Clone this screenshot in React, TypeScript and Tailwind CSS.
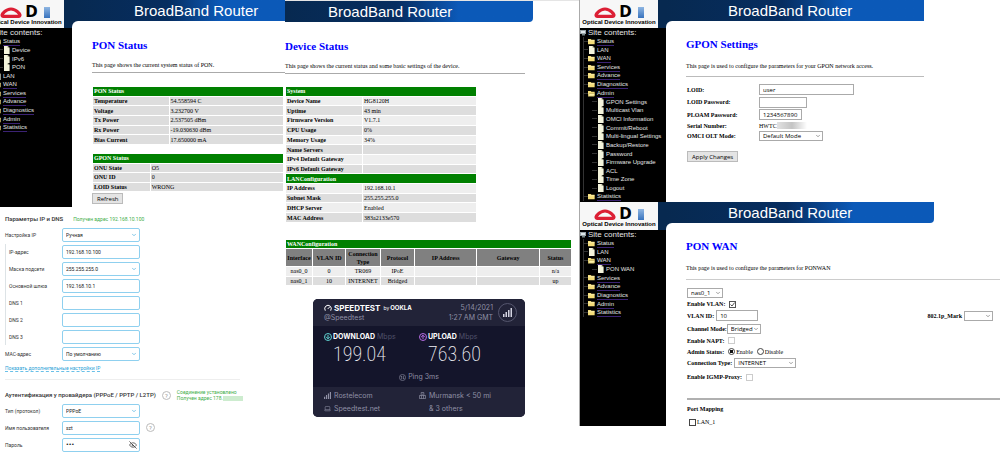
import clsx from "clsx";
import type { ReactNode } from "react";
import {
  ArrowDown,
  ArrowUp,
  ChevronDown,
  EyeOff,
  Gauge,
  Laptop,
} from "lucide-react";

type TreeItem = {
  label: string;
  icon: "folder" | "open" | "page";
  nested?: boolean;
};

type Row = [string, string];

const statusTree: TreeItem[] = [
  { label: "Status", icon: "open" },
  { label: "Device", icon: "page", nested: true },
  { label: "IPv6", icon: "page", nested: true },
  { label: "PON", icon: "page", nested: true },
  { label: "LAN", icon: "page" },
  { label: "WAN", icon: "folder" },
  { label: "Services", icon: "folder" },
  { label: "Advance", icon: "folder" },
  { label: "Diagnostics", icon: "folder" },
  { label: "Admin", icon: "folder" },
  { label: "Statistics", icon: "folder" },
];

const adminTree: TreeItem[] = [
  { label: "Status", icon: "folder" },
  { label: "LAN", icon: "page" },
  { label: "WAN", icon: "folder" },
  { label: "Services", icon: "folder" },
  { label: "Advance", icon: "folder" },
  { label: "Diagnostics", icon: "folder" },
  { label: "Admin", icon: "open" },
  { label: "GPON Settings", icon: "page", nested: true },
  { label: "Multicast Vlan", icon: "page", nested: true },
  { label: "OMCI Information", icon: "page", nested: true },
  { label: "Commit/Reboot", icon: "page", nested: true },
  { label: "Multi-lingual Settings", icon: "page", nested: true },
  { label: "Backup/Restore", icon: "page", nested: true },
  { label: "Password", icon: "page", nested: true },
  { label: "Firmware Upgrade", icon: "page", nested: true },
  { label: "ACL", icon: "page", nested: true },
  { label: "Time Zone", icon: "page", nested: true },
  { label: "Logout", icon: "page", nested: true },
  { label: "Statistics", icon: "folder" },
];

const wanTree: TreeItem[] = [
  { label: "Status", icon: "folder" },
  { label: "LAN", icon: "page" },
  { label: "WAN", icon: "open" },
  { label: "PON WAN", icon: "page", nested: true },
  { label: "Services", icon: "folder" },
  { label: "Advance", icon: "folder" },
  { label: "Diagnostics", icon: "folder" },
  { label: "Admin", icon: "folder" },
  { label: "Statistics", icon: "folder" },
];

const ponRows: Row[] = [
  ["Temperature", "54.558594 C"],
  ["Voltage", "3.232700 V"],
  ["Tx Power", "2.537505 dBm"],
  ["Rx Power", "-19.030630 dBm"],
  ["Bias Current", "17.650000 mA"],
];

const gponRows: Row[] = [
  ["ONU State", "O5"],
  ["ONU ID", "0"],
  ["LOID Status", "WRONG"],
];

const systemRows: Row[] = [
  ["Device Name", "HG8120H"],
  ["Uptime", "43 min"],
  ["Firmware Version", "V1.7.1"],
  ["CPU Usage", "0%"],
  ["Memory Usage", "34%"],
  ["Name Servers", ""],
  ["IPv4 Default Gateway", ""],
  ["IPv6 Default Gateway", ""],
];

const lanRows: Row[] = [
  ["IP Address", "192.168.10.1"],
  ["Subnet Mask", "255.255.255.0"],
  ["DHCP Server", "Enabled"],
  ["MAC Address", "383a2133e570"],
];

function TreeIcon({ icon }: { icon: TreeItem["icon"] }) {
  if (icon === "page") {
    return (
      <svg viewBox="0 0 7 8" className="h-2 w-[7px] shrink-0">
        <path d="M1 0h3.6L6.6 2v6H1z" fill="#f4f4dc" />
        <path d="M4.6 0v2h2z" fill="#a9a98c" />
      </svg>
    );
  }
  return (
    <svg viewBox="0 0 8 7" className="h-[7px] w-[7px] shrink-0">
      <path d="M0 .6h3l1 1h3.600v5H0z" fill="#f3dc78" />
      {icon === "open" ? (
        <path d="M0 6.6 1.5 3.4H8L6.8 6.6z" fill="#fff3a8" stroke="#7c6a20" strokeWidth=".4" />
      ) : (
        <path d="M0 2.6h7.4" stroke="#fff6c4" strokeWidth=".7" />
      )}
    </svg>
  );
}

function OdiLogo() {
  return (
    <div className="flex h-7 w-[78px] shrink-0 flex-col items-center overflow-hidden bg-[#f7f7f7]">
      <div className="mt-1.5 flex h-3 items-center gap-[3px]">
        <svg viewBox="0 0 22 11" className="h-[11px] w-[22px]">
          <path
            d="M3.500 9.300C1 9.300 2 7 4 5.200 6.300 3 8.500 2 11 2s4.700 1 7 3.200c2 1.800 3 4.100.5 4.100z"
            fill="none"
            stroke="#dc1f35"
            strokeWidth="3.200"
          />
        </svg>
        <span className="font-['DejaVu_Sans'] text-[15px] leading-3 font-bold text-black">D</span>
        <span className="ml-[3px] h-[11px] w-1.5 bg-linear-to-b from-[#8fb6e2] to-[#3873bd]" />
      </div>
      <span className="mt-px font-['Liberation_Sans'] text-[6px] leading-[6px] font-bold whitespace-nowrap text-black">
        Optical Device Innovation
      </span>
    </div>
  );
}

function SiteTree({ items, className }: { items: TreeItem[]; className: string }) {
  return (
    <nav className="w-[86px] font-['Liberation_Sans'] text-[#e4e4e4]">
      <p className="flex h-[9px] items-center gap-px text-[8px] leading-[9px] whitespace-nowrap">
        <svg viewBox="0 0 7 7" className="h-[7px] w-[7px] shrink-0">
          <path d="M0 1h6v4H0z" fill="#9aa4a8" />
          <path d="M1 2h4v2H1z" fill="#dfe8ea" />
          <path d="M2 5h3v1.500H2z" fill="#788" />
        </svg>
        Site contents:
      </p>
      <ul className={clsx("ml-[3px] grid auto-rows-fr border-l border-[#333]", className)}>
        {items.map((item) => (
          <li key={item.label} className="flex min-h-0 items-center">
            <span className={clsx("h-px shrink-0 bg-[#333]", item.nested ? "ml-2 w-[5px]" : "w-1")} />
            <TreeIcon icon={item.icon} />
            <a
              href="#"
              className={clsx(
                "ml-[2px] text-[6px] leading-[8px] whitespace-nowrap",
                item.icon !== "page" && "border-b border-[#3b2273] leading-[7px]",
              )}
            >
              {item.label}
            </a>
          </li>
        ))}
      </ul>
    </nav>
  );
}

function Title({ children }: { children: ReactNode }) {
  return <h1 className="text-[11px] leading-[14px] font-bold text-[#0000ff]">{children}</h1>;
}

function BrandBar({ className }: { className: string }) {
  return (
    <div
      className={clsx(
        "flex items-center bg-linear-to-r from-[#072950] via-[#062d60] via-45% to-[#0b59b8] to-70% font-['Liberation_Sans'] text-[15px] leading-[20px] whitespace-nowrap text-white",
        className,
      )}
    >
      BroadBand Router
    </div>
  );
}

type RouterPanelProps = {
  tree: TreeItem[];
  treeClass: string;
  sideClass: string;
  barClass: string;
  className: string;
  children: ReactNode;
};

function RouterPanel({ tree, treeClass, sideClass, barClass, className, children }: RouterPanelProps) {
  return (
    <section className={clsx("flex", className)}>
      <div className={clsx("flex shrink-0 flex-col overflow-hidden bg-black", sideClass)}>
        <div className="flex w-[86px] bg-[#072950]">
          <OdiLogo />
        </div>
        <SiteTree items={tree} className={treeClass} />
      </div>
      <div className="flex min-w-0 flex-1 flex-col">
        <BrandBar className={clsx("shrink-0 pl-[62px]", barClass)} />
        <div className="flex-1 bg-[#072950]">
          <div className="h-full rounded-tl-[6px] bg-white">{children}</div>
        </div>
      </div>
    </section>
  );
}

function GreenHead({ children, span = 2 }: { children: ReactNode; span?: number }) {
  return (
    <tr className="bg-[#008000] text-left text-white">
      <th colSpan={span} className="px-px py-0">
        {children}
      </th>
    </tr>
  );
}

function InfoRows({ rows, labelClass, striped }: { rows: Row[]; labelClass: string; striped?: boolean }) {
  return rows.map(([label, value], i) => (
    <tr key={label} className={striped && i % 2 === 0 ? "bg-[#eeeeee]" : "bg-[#dddddd]"}>
      <th className={clsx("px-px py-0 text-left", labelClass)}>{label}</th>
      <td className="px-px py-0">{value}</td>
    </tr>
  ));
}

const tableClass = "border-separate border-spacing-px text-[6px] leading-[8px]";

function PonStatus() {
  return (
    <RouterPanel
      tree={statusTree}
      treeClass="h-[95px]"
      sideClass="w-[72px] items-end"
      barClass="h-[21px]"
      className="h-[207px]"
    >
      <div className="pt-[17px] pl-5">
        <Title>PON Status</Title>
        <p className="mt-[9px] text-[6px] leading-[8px]">This page shows the current system status of PON.</p>
        <hr className="mt-[3px] border-t border-[#aaa]" />
        <div className="pr-px">
          <table className={clsx(tableClass, "mt-[13px] h-[59px] w-full")}>
            <tbody>
              <GreenHead>PON Status</GreenHead>
              <InfoRows rows={ponRows} labelClass="w-[40%]" />
            </tbody>
          </table>
          <table className={clsx(tableClass, "mt-2 h-[39px] w-full")}>
            <tbody>
              <GreenHead>GPON Status</GreenHead>
              <InfoRows rows={gponRows} labelClass="w-[30%]" />
            </tbody>
          </table>
        </div>
        <button className="mt-px block h-[11px] border border-[#bbb] bg-[#e4e4e4] px-1 font-['Open_Sans'] text-[6px] leading-[8px]">
          Refresh
        </button>
      </div>
    </RouterPanel>
  );
}

function DeviceStatus() {
  return (
    <section className="border-t border-[#e5e5e5]">
      <BrandBar className="mr-[46px] h-[21px] rounded-br-[4px] pl-[43px]" />
      <div className="pt-[17px]">
        <Title>Device Status</Title>
        <p className="mt-[9px] text-[6px] leading-[8px]">
          This page shows the current status and some basic settings of the device.
        </p>
        <hr className="mt-[3px] mr-[54px] border-t border-[#aaa]" />
        <table className={clsx(tableClass, "mt-[12px] h-[137px] w-[192px]")}>
          <tbody>
            <GreenHead>System</GreenHead>
            <InfoRows rows={systemRows} labelClass="w-[76px]" striped />
            <GreenHead>LANConfiguration</GreenHead>
            <InfoRows rows={lanRows} labelClass="w-[76px]" striped />
          </tbody>
        </table>
      </div>
    </section>
  );
}

function WanTable() {
  return (
    <div className="mt-4 pr-[7px]">
      <table className={clsx(tableClass, "h-[47px] w-full table-fixed text-center")}>
        <colgroup>
          <col className="w-[26px]" />
          <col className="w-[32px]" />
          <col className="w-[34px]" />
          <col className="w-[33px]" />
          <col />
          <col />
          <col className="w-[31px]" />
        </colgroup>
        <tbody>
          <GreenHead span={7}>WANConfiguration</GreenHead>
          <tr className="bg-[#808080]">
            <th className="p-0">Interface</th>
            <th className="p-0">VLAN ID</th>
            <th className="p-0">
              Connection
              <br />
              Type
            </th>
            <th className="p-0">Protocol</th>
            <th className="p-0">IP Address</th>
            <th className="p-0">Gateway</th>
            <th className="p-0">Status</th>
          </tr>
          <tr className="bg-[#eeeeee]">
            <td className="p-0">nas0_0</td>
            <td className="p-0">0</td>
            <td className="p-0">TR069</td>
            <td className="p-0">IPoE</td>
            <td className="p-0" />
            <td className="p-0" />
            <td className="p-0">n/a</td>
          </tr>
          <tr className="bg-[#dddddd]">
            <td className="p-0">nas0_1</td>
            <td className="p-0">10</td>
            <td className="p-0">INTERNET</td>
            <td className="p-0">Bridged</td>
            <td className="p-0" />
            <td className="p-0" />
            <td className="p-0">up</td>
          </tr>
        </tbody>
      </table>
    </div>
  );
}

function SignalBars({ className }: { className: string }) {
  return (
    <svg viewBox="0 0 9 9" className={className} fill="currentColor">
      <path d="M0 6h1.500v3H0zM2.500 4H4v5H2.500zM5 2h1.500v7H5zM7.500 0H9v9H7.500z" />
    </svg>
  );
}

const speedClass =
  "ml-[9px] font-['Roboto_Condensed','Noto_Sans_ExtraCondensed','Roboto',sans-serif] text-[20px] leading-[25px] font-extralight text-[#f0f0f6]";

function SpeedtestCard() {
  return (
    <section className="mt-[13px] mr-[54px] ml-7 overflow-hidden rounded-[5px] bg-[#14152b] font-['Inter'] text-[7px] leading-[10px] text-[#8f90a5]">
      <div className="flex h-[27px] items-center bg-[#222338] pr-2 pl-[11px]">
        <div>
          <div className="flex items-center whitespace-nowrap text-white">
            <Gauge className="mr-[2px] h-2 w-2" strokeWidth={3} />
            <span className="text-[8px] font-bold">SPEEDTEST</span>
            <span className="ml-[3px] text-[5px]">by</span>
            <span className="ml-px text-[6px] font-bold">OOKLA</span>
          </div>
          <p>@Speedtest</p>
        </div>
        <div className="ml-auto text-right whitespace-nowrap">
          <p>5/14/2021</p>
          <p>1:27 AM GMT</p>
        </div>
        <span className="ml-[5px] flex h-[19px] w-[19px] items-center justify-center rounded-full border border-[#55566e] text-[#d4d5e2]">
          <SignalBars className="h-[9px] w-[9px]" />
        </span>
      </div>
      <div className="grid h-[61px] grid-cols-[95px_1fr] content-start pt-[6px] pl-[11px]">
        <div>
          <p className="flex items-center gap-px whitespace-nowrap">
            <span className="flex h-2 w-2 items-center justify-center rounded-full border border-[#5fd0d0] text-[#5fd0d0]">
              <ArrowDown className="h-[6px] w-[6px]" strokeWidth={4} />
            </span>
            <b className="text-white">DOWNLOAD</b>
            <span className="ml-px text-[#50516a]">Mbps</span>
          </p>
          <p className={speedClass}>199.04</p>
        </div>
        <div>
          <p className="flex items-center gap-px whitespace-nowrap">
            <span className="flex h-2 w-2 items-center justify-center rounded-full border border-[#b36be0] text-[#b36be0]">
              <ArrowUp className="h-[6px] w-[6px]" strokeWidth={4} />
            </span>
            <b className="text-white">UPLOAD</b>
            <span className="ml-px text-[#50516a]">Mbps</span>
          </p>
          <p className={speedClass}>763.60</p>
        </div>
        <p className="col-span-2 mt-[5px] flex items-center justify-center gap-[2px] pr-[11px]">
          <svg viewBox="0 0 8 8" className="h-[7px] w-[7px]" fill="none" stroke="currentColor" strokeWidth=".7">
            <circle cx="4" cy="4" r="3.500" />
            <path d="M3 6V2.300L1.800 3.500M5 2v3.700L6.200 4.500" />
          </svg>
          Ping 3ms
        </p>
      </div>
      <div className="grid h-[30px] grid-cols-[95px_1fr] content-center gap-y-[3px] bg-[#222338] pl-[11px] whitespace-nowrap">
        <p className="flex items-center gap-[3px]">
          <SignalBars className="h-[7px] w-[7px]" />
          Rostelecom
        </p>
        <p className="flex items-center gap-[3px]">
          <svg viewBox="0 0 8 8" className="h-[7px] w-[7px]" fill="none" stroke="currentColor" strokeWidth=".8">
            <path d="M2.500 4V.6h3V4M.5 7.500V4h7v3.500zM2.800 4v3.500M5.200 4v3.500M4 2v1" />
          </svg>
          Murmansk &lt; 50 mi
        </p>
        <p className="flex items-center gap-[3px]">
          <Laptop className="h-[7px] w-[7px]" />
          Speedtest.net
        </p>
        <p className="pl-[10px]">&amp; 3 others</p>
      </div>
    </section>
  );
}

function KeenField({
  id,
  label,
  value,
  kind = "text",
  nested,
}: {
  id: string;
  label: string;
  value: string;
  kind?: "text" | "select" | "password";
  nested?: boolean;
}) {
  const box = clsx(
    "h-[14px] w-full appearance-none rounded-[2px] border border-[#8fd0ef] bg-white pl-[3px] leading-[12px] text-[#222] outline-none",
    kind === "password" ? "text-[8px]" : "text-[5px]",
  );
  return (
    <div className={clsx("flex items-center", nested && "border-l border-[#dde3e6]")}>
      <label htmlFor={id} className={clsx("shrink-0", nested ? "w-[56px] pl-[3px]" : "w-[57px]")}>
        {label}
      </label>
      <span className="relative flex w-[78px] shrink-0">
        {kind === "select" ? (
          <>
            <select id={id} className={box} defaultValue={value}>
              <option>{value}</option>
            </select>
            <ChevronDown className="pointer-events-none absolute top-1 right-[3px] h-[6px] w-[6px] text-[#58b4e0]" strokeWidth={3} />
          </>
        ) : (
          <input id={id} type={kind} defaultValue={value} className={box} />
        )}
        {kind === "password" && <EyeOff className="absolute top-[3px] right-[3px] h-2 w-2 text-[#222]" />}
      </span>
    </div>
  );
}

function HelpMark() {
  return (
    <button
      aria-label="Справка"
      className="flex h-[9px] w-[9px] shrink-0 items-center justify-center rounded-full border border-[#bbb] text-[6px] leading-[7px] text-[#999]"
    >
      ?
    </button>
  );
}

function KeenSettings() {
  return (
    <section className="px-[5px] font-['Roboto'] text-[5px] leading-[6px] text-[#333]">
      <div className="flex h-[20px] items-center gap-[10px] pt-[4px]">
        <h2 className="text-[6px] leading-[8px] font-medium text-[#333]">Параметры IP и DNS</h2>
        <span className="text-[#3fae49]">Получен адрес 192.168.10.100</span>
      </div>
      <form className="grid h-[135px] auto-rows-fr">
        <KeenField id="mode" label="Настройка IP" value="Ручная" kind="select" />
        <KeenField id="ip" label="IP-адрес" value="192.168.10.100" nested />
        <KeenField id="mask" label="Маска подсети" value="255.255.255.0" kind="select" nested />
        <KeenField id="gw" label="Основной шлюз" value="192.168.10.1" nested />
        <KeenField id="dns1" label="DNS 1" value="" nested />
        <KeenField id="dns2" label="DNS 2" value="" nested />
        <KeenField id="dns3" label="DNS 3" value="" nested />
        <KeenField id="mac" label="MAC-адрес" value="По умолчанию" kind="select" />
      </form>
      <a href="#" className="mt-[3px] inline-block border-b border-dashed border-[#6ac0e8] text-[#2b9fd6]">
        Показать дополнительные настройки IP
      </a>
      <hr className="mt-[7px] mr-10 border-[#eee]" />
      <div className="mt-2 flex h-[14px] items-center gap-[6px]">
        <h2 className="text-[6px] leading-[8px] font-medium whitespace-nowrap text-[#333]">
          Аутентификация у провайдера (PPPoE / PPTP / L2TP)
        </h2>
        <HelpMark />
        <p className="whitespace-nowrap text-[#3fae49]">
          Соединение установлено
          <br />
          Получен адрес 178.
          <span className="inline-block h-[5px] w-5 bg-[#cdeccf] align-middle" />
        </p>
      </div>
      <form className="grid h-[51px] auto-rows-fr">
        <KeenField id="proto" label="Тип (протокол)" value="PPPoE" kind="select" />
        <div className="flex items-center gap-[6px]">
          <KeenField id="user" label="Имя пользователя" value="szt" />
          <HelpMark />
        </div>
        <KeenField id="pass" label="Пароль" value="szt" kind="password" />
      </form>
    </section>
  );
}

const fieldClass =
  "appearance-none border border-[#aaa] bg-white pl-[3px] font-['Open_Sans'] text-[6px] font-normal text-black outline-none";

function Dropdown({ id, value, className }: { id: string; value: string; className: string }) {
  return (
    <span className={clsx("relative flex", className)}>
      <select id={id} defaultValue={value} className={clsx(fieldClass, "h-[10px] w-full leading-[8px]")}>
        <option>{value}</option>
      </select>
      <ChevronDown className="pointer-events-none absolute top-[2px] right-[2px] h-[6px] w-[6px] text-[#444]" />
    </span>
  );
}

function GponSettings() {
  return (
    <RouterPanel
      tree={adminTree}
      treeClass="h-[164px]"
      sideClass="w-[86px]"
      barClass="mr-[76px] h-[21px]"
      className="h-[202px]"
    >
      <div className="pt-4 pl-5 text-[6px] leading-[8px]">
        <Title>GPON Settings</Title>
        <p className="mt-[11px]">This page is used to configure the parameters for your GPON network access.</p>
        <hr className="mt-[6px] mr-[76px] border-[#bbb]" />
        <form className="mt-[6px] pl-px">
          <div className="flex h-[13px] items-center">
            <label htmlFor="loid" className="w-[72px] font-bold">
              LOID:
            </label>
            <input id="loid" defaultValue="user" className={clsx(fieldClass, "h-[11px] w-[95px]")} />
          </div>
          <div className="flex h-3 items-center">
            <label htmlFor="loidpw" className="w-[72px] font-bold">
              LOID Password:
            </label>
            <input id="loidpw" className={clsx(fieldClass, "h-[11px] w-[48px]")} />
          </div>
          <div className="flex h-[13px] items-center">
            <label htmlFor="ploam" className="w-[72px] font-bold">
              PLOAM Password:
            </label>
            <input id="ploam" defaultValue="1234567890" className={clsx(fieldClass, "h-[11px] w-[43px]")} />
          </div>
          <div className="flex h-[9px] items-center">
            <span className="w-[72px] font-bold">Serial Number:</span>
            HWTC
            <span className="h-[7px] w-[30px] bg-linear-to-r from-[#e2e2e2] via-[#c4c4c4] to-white" />
          </div>
          <div className="flex h-[11px] items-center">
            <label htmlFor="omci" className="w-[72px] font-bold">
              OMCI OLT Mode:
            </label>
            <Dropdown id="omci" value="Default Mode" className="w-16" />
          </div>
          <button
            type="button"
            className="mt-[10px] block h-[11px] border border-[#bbb] bg-[#e4e4e4] px-1 font-['Open_Sans'] leading-[8px]"
          >
            Apply Changes
          </button>
        </form>
      </div>
    </RouterPanel>
  );
}

const checkClass = "h-[7px] w-[7px] shrink-0 appearance-none border bg-white";

function PonWan() {
  return (
    <RouterPanel
      tree={wanTree}
      treeClass="h-[78px]"
      sideClass="w-[86px]"
      barClass="mr-[66px] h-[21px] rounded-br-[4px]"
      className="h-[224px]"
    >
      <div className="pt-4 pl-5 text-[6px] leading-[8px]">
        <Title>PON WAN</Title>
        <p className="mt-[11px]">This page is used to configure the parameters for PONWAN</p>
        <hr className="mt-[7px] border-[#ccc]" />
        <form className="mt-[8px] pl-px font-bold">
          <Dropdown id="iface" value="nas0_1" className="w-9" />
          <div className="mt-px flex h-[10px] items-center gap-1">
            <label htmlFor="vlan">Enable VLAN:</label>
            <span className="relative flex">
              <input id="vlan" type="checkbox" defaultChecked className={clsx(checkClass, "border-[#555]")} />
              <svg viewBox="0 0 7 7" className="pointer-events-none absolute inset-0 h-[7px] w-[7px]">
                <path d="M1.500 3.500 3 5l2.700-3.500" fill="none" stroke="#222" strokeWidth=".8" />
              </svg>
            </span>
          </div>
          <div className="flex h-[13px] items-center justify-between pr-[7px]">
            <span className="flex items-center gap-[2px]">
              <label htmlFor="vid">VLAN ID:</label>
              <input id="vid" defaultValue="10" className={clsx(fieldClass, "h-[11px] w-[42px]")} />
            </span>
            <span className="flex items-center gap-[2px]">
              <label htmlFor="mark">802.1p_Mark</label>
              <Dropdown id="mark" value="" className="w-[29px]" />
            </span>
          </div>
          <div className="flex h-[13px] items-center">
            <label htmlFor="chan">Channel Mode:</label>
            <Dropdown id="chan" value="Bridged" className="w-[34px]" />
          </div>
          <div className="flex h-[11px] items-center gap-1">
            <label htmlFor="napt">Enable NAPT:</label>
            <input id="napt" type="checkbox" className={clsx(checkClass, "border-[#ccc]")} />
          </div>
          <div className="flex h-[11px] items-center">
            <span className="mr-1">Admin Status:</span>
            <input
              id="on"
              name="admin"
              type="radio"
              defaultChecked
              className={clsx(
                checkClass,
                "rounded-full border-[#444] checked:bg-[radial-gradient(#111_45%,white_50%)]",
              )}
            />
            <label htmlFor="on" className="ml-px font-normal">
              Enable
            </label>
            <input
              id="off"
              name="admin"
              type="radio"
              className={clsx(
                checkClass,
                "ml-1 rounded-full border-[#444] checked:bg-[radial-gradient(#111_45%,white_50%)]",
              )}
            />
            <label htmlFor="off" className="ml-px font-normal">
              Disable
            </label>
          </div>
          <div className="flex h-[11px] items-center gap-[2px]">
            <label htmlFor="conn">Connection Type:</label>
            <Dropdown id="conn" value="INTERNET" className="w-[62px]" />
          </div>
          <div className="mt-1 flex h-[10px] items-center gap-1">
            <label htmlFor="igmp">Enable IGMP-Proxy:</label>
            <input id="igmp" type="checkbox" className={clsx(checkClass, "border-[#ccc]")} />
          </div>
          <hr className="mt-4 border-t-2 border-[#b0b0b0]" />
          <p className="mt-[5px]">Port Mapping</p>
          <div className="mt-[5px] flex items-center gap-px pl-[2px] font-normal">
            <input id="lan1" type="checkbox" className={clsx(checkClass, "border-[#444]")} />
            <label htmlFor="lan1">LAN_1</label>
          </div>
        </form>
      </div>
    </RouterPanel>
  );
}

export default function App() {
  return (
    <main className="grid min-h-screen grid-cols-[285fr_294fr_421fr] items-start bg-white font-['Liberation_Serif'] text-black">
      <div className="min-w-0">
        <PonStatus />
        <KeenSettings />
      </div>
      <div className="min-w-0">
        <DeviceStatus />
        <WanTable />
        <SpeedtestCard />
      </div>
      <div className="min-w-0 border-l border-[#aaa]">
        <GponSettings />
        <PonWan />
      </div>
    </main>
  );
}
